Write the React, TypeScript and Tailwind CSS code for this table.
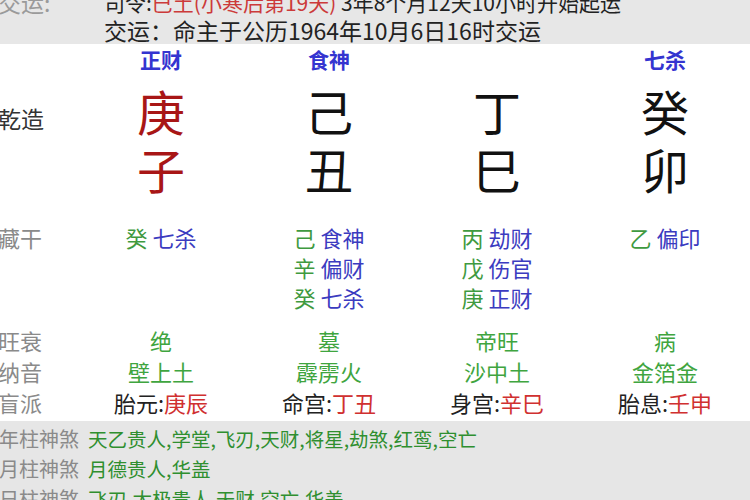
import React from 'react';

const font = { fontFamily: '"Noto Sans CJK SC", "Noto Sans", sans-serif' };

const pillars = [
  { god: '正财', stem: '庚', branch: '子', red: true, hidden: [['癸', '七杀']], state: '绝', nayin: '壁上土', mp: ['胎元:', '庚辰'] },
  { god: '食神', stem: '己', branch: '丑', red: false, hidden: [['己', '食神'], ['辛', '偏财'], ['癸', '七杀']], state: '墓', nayin: '霹雳火', mp: ['命宫:', '丁丑'] },
  { god: '', stem: '丁', branch: '巳', red: false, hidden: [['丙', '劫财'], ['戊', '伤官'], ['庚', '正财']], state: '帝旺', nayin: '沙中土', mp: ['身宫:', '辛巳'] },
  { god: '七杀', stem: '癸', branch: '卯', red: false, hidden: [['乙', '偏印']], state: '病', nayin: '金箔金', mp: ['胎息:', '壬申'] },
];

const shensha = [
  ['年柱神煞', '天乙贵人,学堂,飞刃,天财,将星,劫煞,红鸾,空亡'],
  ['月柱神煞', '月德贵人,华盖'],
  ['日柱神煞', '飞刃,太极贵人,天财,空亡,华盖'],
];

function Row({ label, h, labelClass = 'text-[22px] text-[#8a8a8a]', children }: { label?: string; h: string; labelClass?: string; children: React.ReactNode }) {
  return (
    <div className={`grid grid-cols-[77px_repeat(4,168px)] items-center ${h}`}>
      <div className={`-ml-[2px] whitespace-nowrap ${labelClass}`}>{label}</div>
      {children}
    </div>
  );
}

export default function App() {
  return (
    <div className="w-[750px] h-[500px] overflow-hidden bg-white" style={font}>
      {/* top band */}
      <div className="h-[44px] overflow-hidden bg-[#e7e7e7] flex leading-[28px]">
        <div className="w-[106px] shrink-0 -mt-[12px] -ml-[2px] text-[23px] text-[#9a9a9a]">交运:</div>
        <div className="-mt-[12px] text-[#222] whitespace-nowrap">
          <div className="text-[21px]">
            司令:<span className="text-[#cc3a3a]">巳土(小寒后第19天)</span> 3年8个月12天10小时开始起运
          </div>
          <div className="text-[23px]">交运：命主于公历1964年10月6日16时交运</div>
        </div>
      </div>

      {/* pillars */}
      <div className="h-[377px]">
        <Row h="h-[32px]">
          {pillars.map((p, i) => (
            <div key={i} className="text-center text-[21px] font-bold text-[#3434d0]">{p.god}</div>
          ))}
        </Row>
        <Row h="h-[68px]" label="乾造" labelClass="pt-[16px] text-[23px] text-[#333]">
          {pillars.map((p, i) => (
            <div key={i} className={`text-center text-[48px] leading-none ${p.red ? 'text-[#a81616]' : 'text-[#111]'}`}>{p.stem}</div>
          ))}
        </Row>
        <Row h="h-[48px]">
          {pillars.map((p, i) => (
            <div key={i} className={`text-center text-[48px] leading-none ${p.red ? 'text-[#a81616]' : 'text-[#111]'}`}>{p.branch}</div>
          ))}
        </Row>

        <div className="grid grid-cols-[77px_repeat(4,168px)] mt-[30px] h-[90px] text-[22px] leading-[30px]">
          <div className="-ml-[2px] text-[#8a8a8a]">藏干</div>
          {pillars.map((p, i) => (
            <div key={i} className="flex justify-center">
              <div>
                {p.hidden.map(([s, g], j) => (
                  <div key={j} className="whitespace-nowrap">
                    <span className="text-[#3f9a3f]">{s}</span> <span className="text-[#3b3bc0]">{g}</span>
                  </div>
                ))}
              </div>
            </div>
          ))}
        </div>

        <div className="mt-[12px]">
          <Row h="h-[31px]" label="旺衰">
            {pillars.map((p, i) => (
              <div key={i} className="text-center text-[22px] text-[#3fa53f]">{p.state}</div>
            ))}
          </Row>
          <Row h="h-[31px]" label="纳音">
            {pillars.map((p, i) => (
              <div key={i} className="text-center text-[22px] text-[#3fa53f]">{p.nayin}</div>
            ))}
          </Row>
          <Row h="h-[31px]" label="盲派">
            {pillars.map((p, i) => (
              <div key={i} className="text-center text-[22px] text-[#222]">
                {p.mp[0]}<span className="text-[#d03030]">{p.mp[1]}</span>
              </div>
            ))}
          </Row>
        </div>
      </div>

      {/* shensha band */}
      <div className="h-[79px] bg-[#e6e6e6] pt-[3px] leading-[30px]">
        {shensha.map(([l, v], i) => (
          <div key={i} className="flex items-baseline whitespace-nowrap">
            <div className="w-[89px] shrink-0 -ml-[1px] text-[20px] text-[#8a8a8a]">{l}</div>
            <div className="text-[19.5px] text-[#2f8f2f]">{v}</div>
          </div>
        ))}
      </div>
    </div>
  );
}
